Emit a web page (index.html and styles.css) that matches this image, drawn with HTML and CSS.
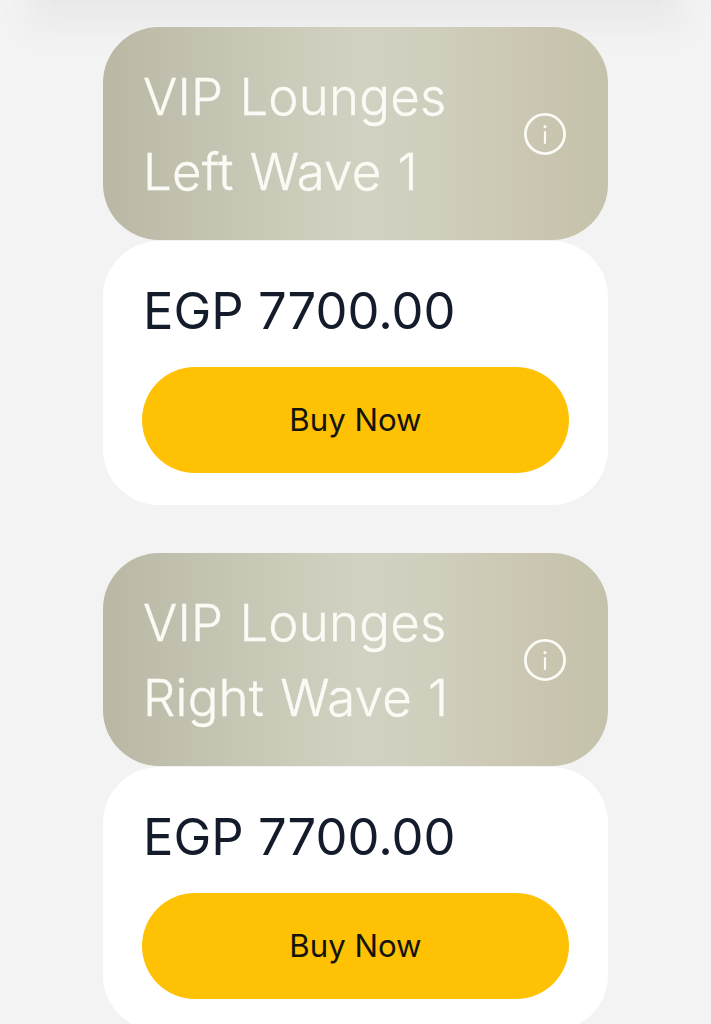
FILE: index.html
```html
<!DOCTYPE html>
<html lang="en">
<head>
    <meta charset="UTF-8">
    <meta name="viewport" content="width=device-width, initial-scale=1.0">
    <title>Tickets</title>
    <link rel="stylesheet" href="styles.css">
</head>
<body>
    <div class="top-bar"></div>
    <main class="ticket-list">
        <section class="ticket">
            <div class="ticket-head">
                <h2 class="ticket-name">VIP Lounges<br>Left Wave 1</h2>
                <svg class="info-icon" viewBox="0 0 42 42" fill="none" stroke="currentColor" aria-label="Info">
                    <circle cx="21" cy="21" r="19.6" stroke-width="2.8"/>
                    <path d="M21 19v11" stroke-width="2.2" stroke-linecap="round"/>
                    <circle cx="21" cy="13.6" r="1.6" fill="currentColor" stroke="none"/>
                </svg>
            </div>
            <div class="ticket-body">
                <p class="price">EGP 7700.00</p>
                <button class="buy-btn">Buy Now</button>
            </div>
        </section>
        <section class="ticket">
            <div class="ticket-head">
                <h2 class="ticket-name">VIP Lounges<br>Right Wave 1</h2>
                <svg class="info-icon" viewBox="0 0 42 42" fill="none" stroke="currentColor" aria-label="Info">
                    <circle cx="21" cy="21" r="19.6" stroke-width="2.8"/>
                    <path d="M21 19v11" stroke-width="2.2" stroke-linecap="round"/>
                    <circle cx="21" cy="13.6" r="1.6" fill="currentColor" stroke="none"/>
                </svg>
            </div>
            <div class="ticket-body">
                <p class="price">EGP 7700.00</p>
                <button class="buy-btn">Buy Now</button>
            </div>
        </section>
    </main>
</body>
</html>
```

FILE: styles.css
```css
html, body {
    height: 1024px;
    overflow: hidden;
}

body {
    margin: 0;
    background: #f3f3f3;
    font-family: 'Inter', 'Liberation Sans', sans-serif;
    position: relative;
}

/* bottom edge of the sticky header, mostly scrolled out of the shot */
.top-bar {
    position: absolute;
    top: -36px;
    left: 50px;
    right: 50px;
    height: 40px;
    background: #e9e9e9;
    box-shadow: 0 2px 30px 22px #eaeaea;
}

.ticket-list {
    position: relative;
    display: flex;
    flex-direction: column;
    gap: 48px;
    width: 505px;
    margin: 0 auto;
    padding-top: 27px;
}

.ticket-head {
    display: flex;
    align-items: center;
    justify-content: space-between;
    height: 213px;
    padding: 0 42px 0 40px;
    box-sizing: border-box;
    border-radius: 56px;
    color: #fbfbf6;
    background: linear-gradient(90deg, #bab7a5 0%, #c3c1af 18%, #cecdbc 40%, #d3d1c2 52%, #cfcdbb 68%, #cac6b1 85%, #c5c2ab 100%);
}

.ticket-name {
    margin: 0;
    font-size: 51px;
    font-weight: 300;
    line-height: 75px;
    letter-spacing: .2px;
    word-spacing: 1.5px;
    -webkit-text-stroke: .4px #fbfbf6;
}

.info-icon {
    width: 42px;
    height: 42px;
    flex: none;
}

.ticket-body {
    margin-top: 1px;
    padding: 40px 39px 32px;
    border-radius: 56px;
    background: #fff;
}

.price {
    margin: 0 0 26px 1px;
    font-size: 50.7px;
    line-height: 60px;
    font-weight: 400;
    color: #141b2b;
}

.buy-btn {
    display: block;
    width: 100%;
    height: 106px;
    border: none;
    border-radius: 53px;
    background: #fec104;
    color: #14130c;
    font-family: inherit;
    font-size: 31.2px;
    cursor: pointer;
}
```
